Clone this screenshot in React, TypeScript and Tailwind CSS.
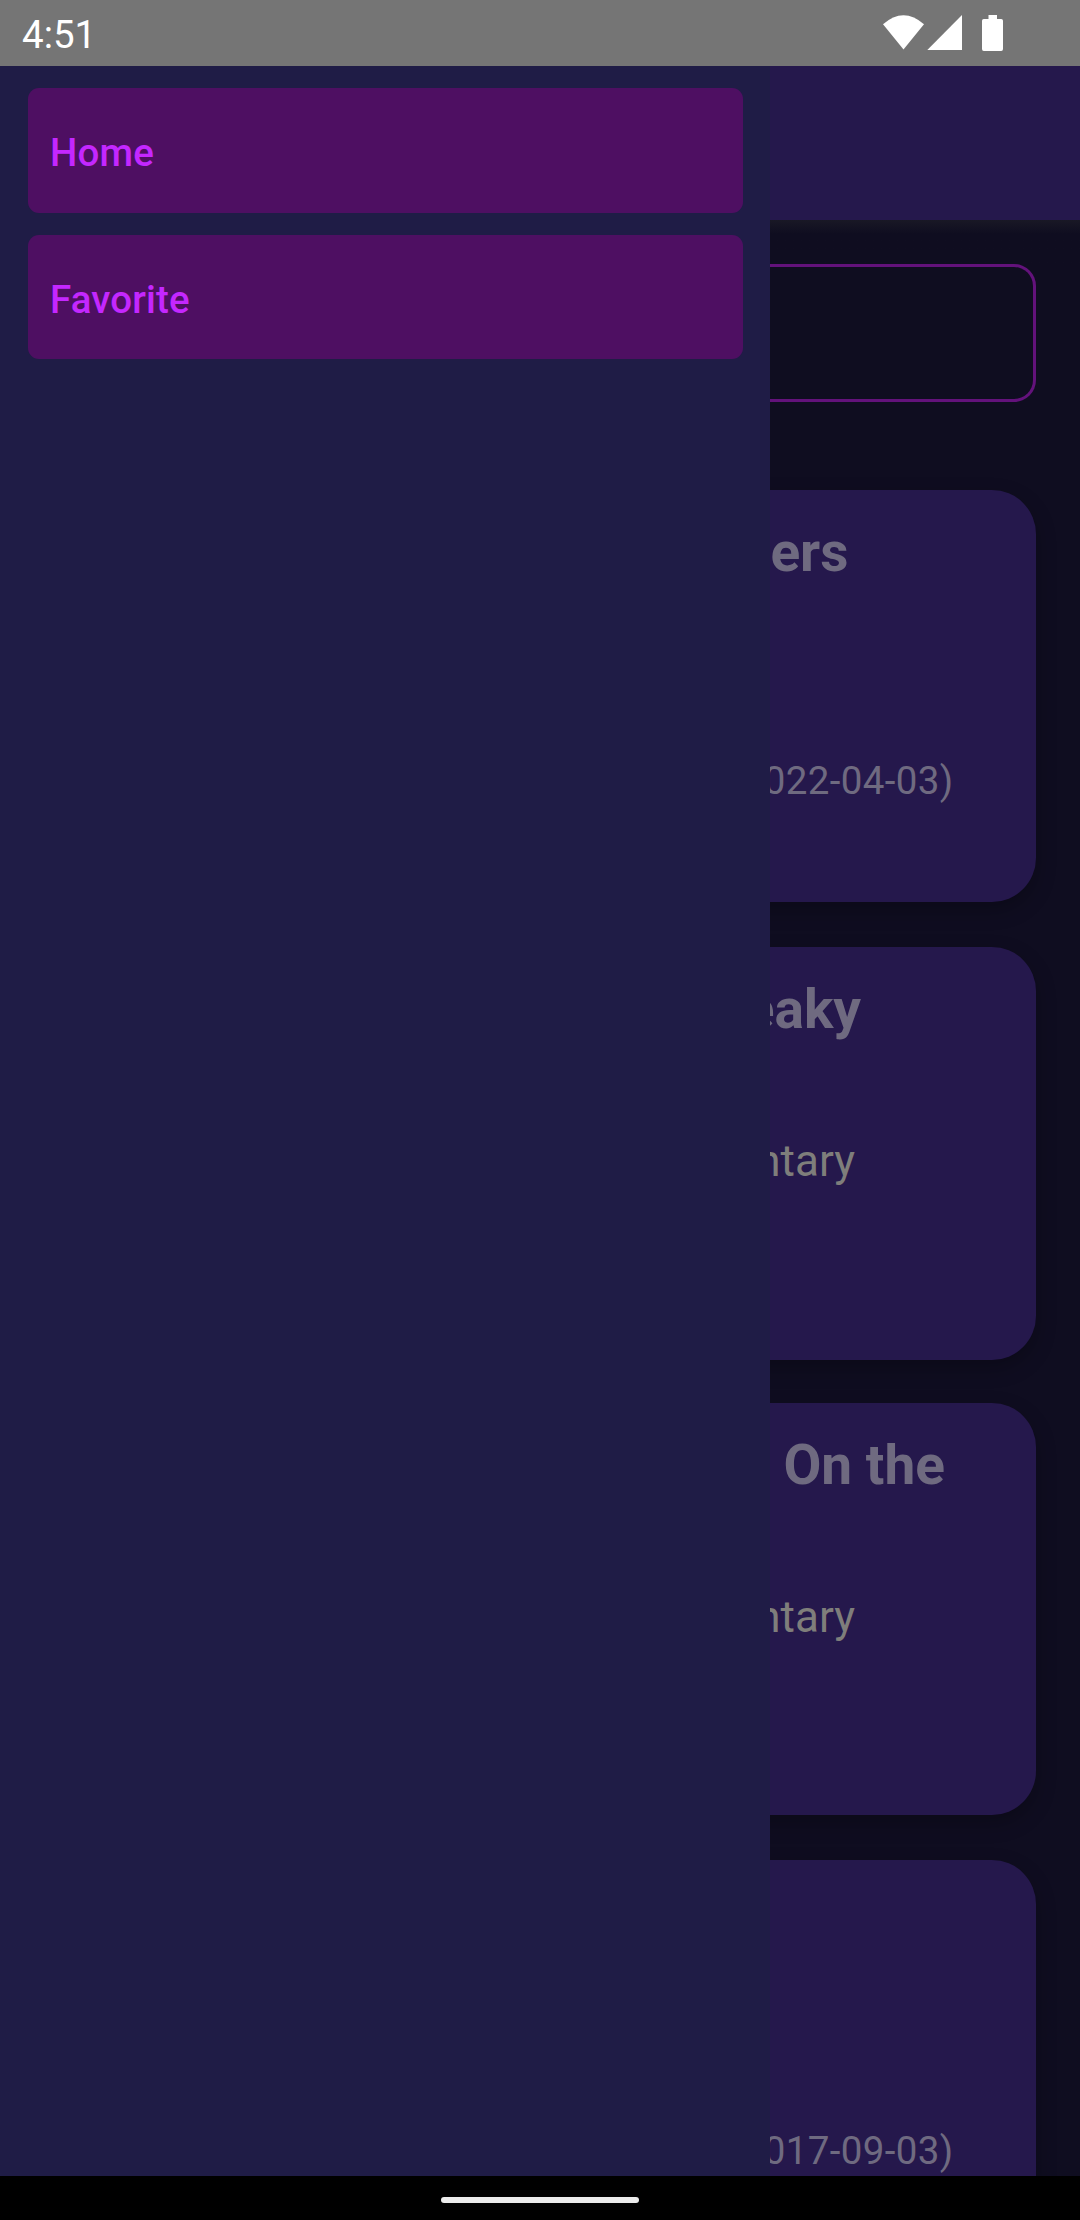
import React from "react";

type Show = {
  key: string;
  title?: string;
  titleEnd?: string;
  genre?: string;
  date?: string;
  box: string;
};

const shows: Show[] = [
  { key: "a", title: "ers", titleEnd: "pr-[187.5px]", date: "022-04-03)", box: "h-[412px] mb-[45px]" },
  { key: "b", title: "eaky", titleEnd: "pr-[175px]", genre: "ntary", box: "h-[413px] mb-[43px]" },
  { key: "c", title: "On the", titleEnd: "pr-[91px]", genre: "ntary", box: "h-[412px] mb-[45px]" },
  { key: "d", date: "017-09-03)", box: "h-[412px]" },
];

function StatusBar() {
  return (
    <header className="flex h-[66px] shrink-0 items-start justify-between bg-[#757575] text-white">
      <span className="ml-[22px] mt-[12px] text-[38.5px] leading-[46px]">4:51</span>
      <svg width="220" height="66" viewBox="0 0 220 66" fill="currentColor" aria-hidden="true">
        <path d="M23 24.2 Q43.5 6.2 64 24.2 L43.5 49.5 Z" />
        <path d="M102 15 V50 H67.3 Z" />
        <path d="M128.5 15 H137 V19 H141.2 Q143 19 143 20.8 V49 Q143 51 141.2 51 H123.8 Q122 51 122 49 V20.8 Q122 19 123.8 19 H128.5 Z" />
      </svg>
    </header>
  );
}

function DrawerItem({ label, height }: { label: string; height: string }) {
  return (
    <a className={`block rounded-[11px] bg-[#4e0f62] pl-[22px] pt-[42px] text-[38.5px] font-medium leading-[46px] tracking-[0.15px] text-[#c427ff] ${height}`}>
      {label}
    </a>
  );
}

function ShowCard({ show }: { show: Show }) {
  return (
    <article className={`shrink-0 rounded-[44px] bg-[#25184c] pt-[30px] shadow-[0_8px_20px_rgba(0,0,0,0.25)] -ml-[60px] mr-[44px] text-right text-[#6f6a80] ${show.box}`}>
      <h2 className={`h-[158px] whitespace-nowrap text-[55px] font-bold leading-[64px] ${show.titleEnd ?? ""}`}>{show.title}</h2>
      <p className="h-[80px] pr-[181px] text-[44px] leading-[52px] text-[#7f7e7b]">{show.genre}</p>
      <p className="whitespace-nowrap pr-[82.5px] text-[38.5px] leading-[46px] tracking-[0.37px]">{show.date}</p>
    </article>
  );
}

export default function App() {
  return (
    <div className="flex h-[2220px] w-[1080px] flex-col overflow-hidden bg-[#0f0d20] font-[Roboto,sans-serif]">
      <StatusBar />
      <div className="flex min-h-0 flex-1">
        <nav className="flex w-[770px] shrink-0 flex-col gap-[22px] bg-[#1f1c46] pl-[28px] pr-[27px] pt-[22px]">
          <DrawerItem label="Home" height="h-[125px]" />
          <DrawerItem label="Favorite" height="h-[124px]" />
        </nav>
        <main className="flex min-w-0 flex-1 flex-col overflow-hidden">
          <div className="h-[154px] shrink-0 bg-[#25184c]" />
          <div className="h-[44px] shrink-0 bg-linear-to-b from-[#191825] to-[#0f0d20] to-[14px]" />
          <div className="mb-[88px] mr-[44px] h-[138px] shrink-0 rounded-r-[22px] border-y-[3px] border-r-[3px] border-[#63127b]" />
          {shows.map((show) => (
            <ShowCard key={show.key} show={show} />
          ))}
        </main>
      </div>
      <footer className="flex h-[44px] shrink-0 justify-center bg-black pt-[21px]">
        <div className="h-[6px] w-[198px] rounded-full bg-[#ececec]" />
      </footer>
    </div>
  );
}
